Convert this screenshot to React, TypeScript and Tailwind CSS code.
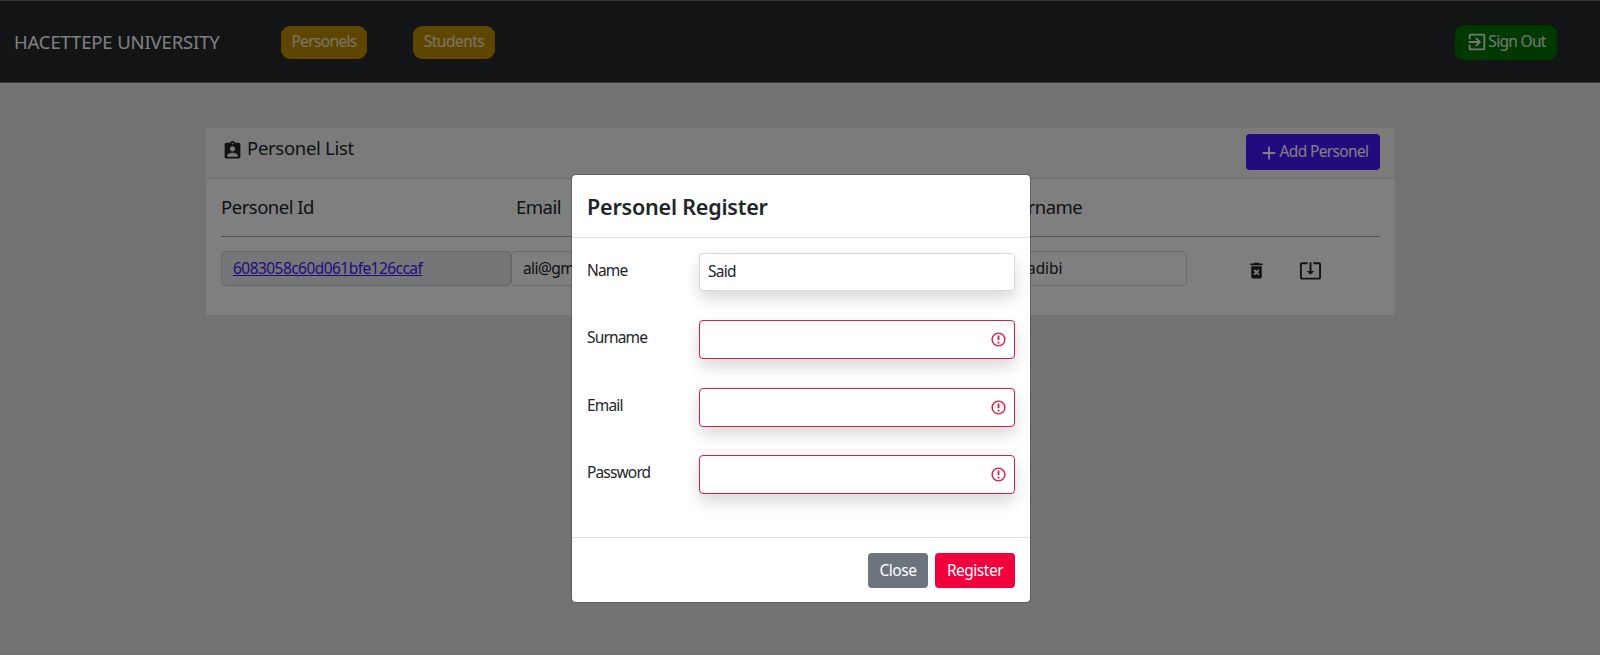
import React from "react";
import {
  MdAdd,
  MdAssignmentInd,
  MdDeleteForever,
  MdExitToApp,
  MdSystemUpdateAlt,
} from "react-icons/md";

function NavBar() {
  return (
    <header className="flex h-[83px] items-center border-y border-[#6c757d] bg-[#25292c] pl-[14px] pr-[43px] pt-px text-white">
      <span className="w-[267px] whitespace-nowrap text-[18.5px] leading-7 tracking-[-0.15px]">HACETTEPE UNIVERSITY</span>
      <nav className="flex gap-[46px]">
        <a className="flex h-[33px] w-[86px] items-center justify-center rounded-[9px] bg-[#be8d00] pb-px text-[15.5px] tracking-[-0.65px] text-white/80">Personels</a>
        <a className="flex h-[33px] w-[82px] items-center justify-center rounded-[9px] bg-[#be8d00] pb-px text-[15.5px] tracking-[-0.5px] text-white/80">Students</a>
      </nav>
      <button className="ml-auto flex h-[35px] w-[102px] items-center justify-center rounded-[9px] bg-[#007300] text-[15.5px] tracking-[-0.7px] text-white/90">
        <MdExitToApp className="size-[22px] shrink-0" />
        <span className="whitespace-nowrap pb-px">Sign Out</span>
      </button>
    </header>
  );
}

function PersonelCard() {
  return (
    <section className="ml-[206px] mt-[45px] h-[187px] w-[1189px] rounded-[3px] bg-white text-[#212529]">
      <div className="flex h-[51px] items-start justify-between rounded-t-[3px] border-b border-[#dfdfdf] bg-[#f7f7f7] pl-4 pr-[15px] pt-[6px]">
        <h5 className="flex h-[30px] items-center gap-1 text-[18.5px] tracking-[-0.3px]">
          <MdAssignmentInd className="mt-[3px] size-[21px]" />
          <span className="pb-[2px]">Personel List</span>
        </h5>
        <button className="flex h-9 w-[134px] items-center justify-center rounded bg-[#4614ff] text-[15.5px] tracking-[-0.65px] text-white">
          <MdAdd className="mt-[2px] size-[22px] shrink-0" />
          <span className="whitespace-nowrap">Add Personel</span>
        </button>
      </div>
      <div className="px-[15px]">
        <div className="grid h-[58px] grid-cols-[295px_491px_1fr] items-center border-b border-[#a4a6a8] pb-[2px] text-[18.5px] tracking-[-0.5px]">
          <span>Personel Id</span>
          <span>Email</span>
          <span>Surname</span>
        </div>
        <div className="mt-[14px] flex h-[35px] text-[15.5px] tracking-[-0.6px]">
          <div className="flex w-[290px] items-center rounded border border-[#ced4da] bg-[#e9ecef] pl-[11px]">
            <a className="tracking-[-0.55px] text-[#4614ff] underline">6083058c60d061bfe126ccaf</a>
          </div>
          <div className="flex w-[242px] items-center rounded border border-[#ced4da] pl-[11px]">ali@gm</div>
          <div className="w-[242px] rounded border border-[#ced4da]" />
          <div className="flex w-[192px] items-center rounded border border-[#ced4da] pl-[7px] tracking-[-0.1px]">Karadibi</div>
          <MdDeleteForever className="ml-[59px] mt-[9px] size-[21px]" />
          <MdSystemUpdateAlt className="ml-[32px] mt-[8px] size-[23px]" />
        </div>
      </div>
    </section>
  );
}

function AlertCircle() {
  return (
    <svg viewBox="0 0 16 16" className="size-[15px]" fill="none" stroke="#d3204a">
      <circle cx="8" cy="8" r="6.8" strokeWidth="1.5" />
      <path d="M8 3.8v5M8 10.4v1.8" strokeWidth="2" />
    </svg>
  );
}

function Field({ label, value, invalid }: { label: string; value?: string; invalid?: boolean }) {
  return (
    <div className="flex h-[67.4px] items-start">
      <label className="w-[112px] pt-[6px] text-[15.5px] leading-[23px] tracking-[-0.85px]">{label}</label>
      <div
        className={
          invalid
            ? "flex h-[39px] w-[316px] items-center justify-end rounded border border-[#d3204a] bg-white pr-[8px] shadow-[0_8px_16px_rgba(0,0,0,0.15)]"
            : "flex h-[38px] w-[316px] items-center rounded border border-[#d5d9dd] bg-white pl-2 text-[15.5px] tracking-[-0.75px] shadow-[0_8px_16px_rgba(0,0,0,0.15)]"
        }
      >
        {value}
        {invalid && <AlertCircle />}
      </div>
    </div>
  );
}

function RegisterDialog() {
  return (
    <div className="absolute inset-0 flex items-start bg-black/50 pl-[571px] pt-[174px]">
      <div role="dialog" className="flex h-[429px] w-[460px] flex-col rounded-[5px] border border-black/20 bg-white bg-clip-padding text-[#212529]">
        <h2 className="flex h-[63px] items-center border-b border-[#dee2e6] px-[15px] pt-[2px] text-[21.5px] font-semibold tracking-[-0.2px]">Personel Register</h2>
        <div className="h-[300px] border-b border-[#dee2e6] px-[15px] pt-[15px]">
          <Field label="Name" value="Said" />
          <Field label="Surname" invalid />
          <Field label="Email" invalid />
          <Field label="Password" invalid />
        </div>
        <div className="flex justify-end gap-[7px] px-[15px] pt-[15px] text-[15.5px] tracking-[-0.5px] text-white">
          <button className="h-[35px] w-[60px] rounded bg-[#6c757d]">Close</button>
          <button className="h-[35px] w-[80px] rounded bg-[#f2003c]">Register</button>
        </div>
      </div>
    </div>
  );
}

export default function App() {
  return (
    <main className="relative h-[655px] w-[1600px] overflow-hidden bg-[#e6e6e6] font-['Noto_Sans',sans-serif]">
      <NavBar />
      <PersonelCard />
      <RegisterDialog />
    </main>
  );
}
